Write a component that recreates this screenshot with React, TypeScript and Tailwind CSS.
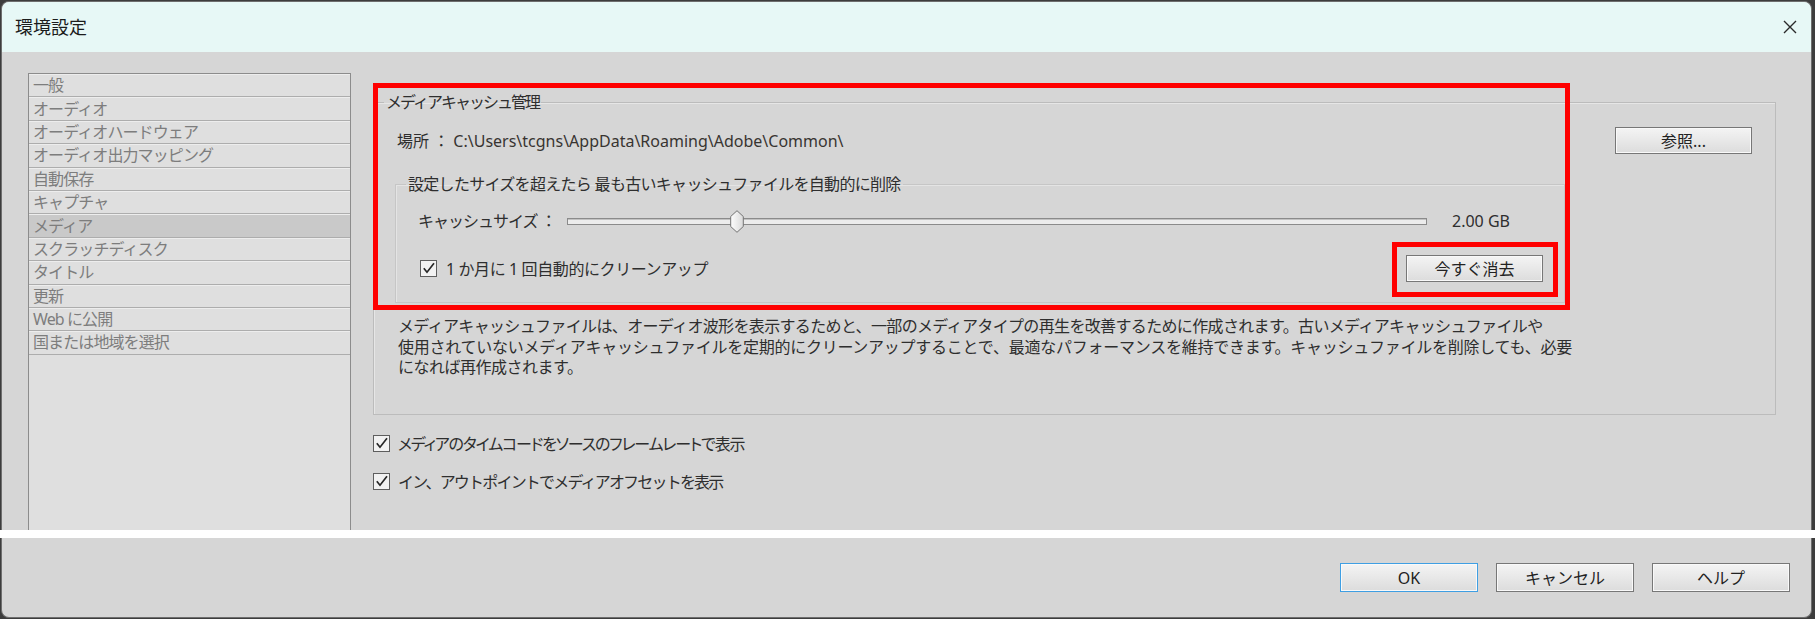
import React from "react";

const categories = [
  "一般",
  "オーディオ",
  "オーディオハードウェア",
  "オーディオ出力マッピング",
  "自動保存",
  "キャプチャ",
  "メディア",
  "スクラッチディスク",
  "タイトル",
  "更新",
  "Web に公開",
  "国または地域を選択",
];

const font = "[font-family:'Noto_Sans','Noto_Sans_CJK_JP',sans-serif]";

function Check() {
  return (
    <span className="flex h-[17px] w-[17px] shrink-0 items-center justify-center border border-[#5e5e5e] bg-[#f2f2f2]">
      <svg viewBox="0 0 15 15" className="h-[15px] w-[15px]">
        <path d="M2.8 7.2 L6 11.2 L13 2.2" fill="none" stroke="#262626" strokeWidth="1.7" />
      </svg>
    </span>
  );
}

function Button({ children, className = "" }: { children: React.ReactNode; className?: string }) {
  return (
    <button
      type="button"
      className={`flex items-center justify-center border bg-[linear-gradient(#f4f4f4,#dcdcdc)] text-[16px] text-[#222] shadow-[inset_0_0_0_1px_#f9f9f9] ${className}`}
    >
      {children}
    </button>
  );
}

export default function App() {
  return (
    <div className={`h-[619px] w-[1815px] overflow-hidden bg-[#3d3d3d] pt-px ${font}`}>
      {/* upper part of the dialog */}
      <div className="ml-px flex h-[529px] w-[1811px] flex-col overflow-hidden rounded-t-[8px] border-x border-t border-[#6e6e6e] bg-[#d6d6d6]">
        <div className="flex h-[50px] shrink-0 items-center justify-between bg-[#e7f8f6] pl-[13px] pr-[14px]">
          <span className="text-[18px] text-[#1c1c1c]">環境設定</span>
          <svg viewBox="0 0 14 14" className="h-[14px] w-[14px]">
            <path d="M1 1 L13 13 M13 1 L1 13" stroke="#2a2a2a" strokeWidth="1.4" />
          </svg>
        </div>

        <div className="relative flex min-h-0 flex-1 overflow-hidden">
          {/* category list */}
          <div className="ml-[26px] mt-[21px] h-[480px] w-[323px] shrink-0 border border-[#8c8c8c] bg-[#dfdfdf]">
            {categories.map((c) => (
              <div
                key={c}
                className={`flex h-[23.4px] items-center border-b border-[#adadad] pl-[4px] text-[16px] leading-none tracking-[-0.9px] text-[#7d7d7d] shadow-[inset_0_1px_0_#ededed] ${
                  c === "メディア" ? "bg-[#c9c9c9]" : ""
                }`}
              >
                {c}
              </div>
            ))}
          </div>

          {/* media settings */}
          <div className="ml-[22px] w-[1403px] shrink-0 text-[16px] text-[#2e2e2e]">
            <fieldset className="mt-[39px] border border-[#bcbcbc] pb-[36px] shadow-[inset_1px_1px_0_#e6e6e6]">
              <legend className="ml-[10px] px-[2px] leading-[22px] tracking-[-2px]">メディアキャッシュ管理</legend>

              <div className="mt-[14px] flex h-[27px] items-center justify-between pl-[23px] pr-[23px]">
                <span>
                  場所 ： <span className="text-[#383431]">C:\Users\tcgns\AppData\Roaming\Adobe\Common\</span>
                </span>
                <Button className="h-[27px] w-[137px] border-[#777]">参照...</Button>
              </div>

              <fieldset className="ml-[21px] mr-[210px] mt-[19px] border border-[#c6c6c6] pb-[20px] shadow-[inset_1px_1px_0_#e4e4e4]">
                <legend className="ml-[10px] px-[2px] leading-[22px] tracking-[-0.7px]">
                  設定したサイズを超えたら 最も古いキャッシュファイルを自動的に削除
                </legend>

                <div className="mt-[15px] flex h-[22px] items-center pl-[22px]">
                  <span className="w-[149px] shrink-0 tracking-[-1px]">キャッシュサイズ ：</span>
                  <div className="relative h-[22px] w-[860px] shrink-0">
                    <div className="absolute left-0 right-0 top-[8px] h-[7px] border border-[#8b8b8b] bg-[#ececec] shadow-[inset_0_1px_0_#c2c2c2]" />
                    <svg viewBox="0 0 14 23" className="absolute left-[163px] top-0 h-[23px] w-[14px]">
                      <defs>
                        <linearGradient id="thumb" x1="0" y1="0" x2="1" y2="0">
                          <stop offset="0" stopColor="#fdfdfd" />
                          <stop offset="1" stopColor="#dadada" />
                        </linearGradient>
                      </defs>
                      <path d="M7 0.7 L13.3 6.5 V16.5 L7 22.3 L0.7 16.5 V6.5 Z" fill="url(#thumb)" stroke="#737373" strokeWidth="1" />
                    </svg>
                  </div>
                  <span className="ml-[25px]">2.00 GB</span>
                </div>

                <div className="mt-[23px] flex h-[27px] items-center justify-between pl-[24px] pr-[21px]">
                  <div className="flex items-center gap-[9px]">
                    <Check />
                    <span className="tracking-[-0.4px]">1 か月に 1 回自動的にクリーンアップ</span>
                  </div>
                  <Button className="h-[27px] w-[137px] border-[#777]">今すぐ消去</Button>
                </div>
              </fieldset>

              <p className="mt-[13px] whitespace-nowrap pl-[24px] leading-[20.5px]">
                <span className="block tracking-[-0.65px]">
                  メディアキャッシュファイルは、オーディオ波形を表示するためと、一部のメディアタイプの再生を改善するために作成されます。古いメディアキャッシュファイルや
                </span>
                <span className="block tracking-[-0.25px]">
                  使用されていないメディアキャッシュファイルを定期的にクリーンアップすることで、最適なパフォーマンスを維持できます。キャッシュファイルを削除しても、必要
                </span>
                <span className="block tracking-[-0.5px]">になれば再作成されます。</span>
              </p>
            </fieldset>

            <div className="mt-[19px] flex h-[20px] items-center gap-[8px]">
              <Check />
              <span className="[font-feature-settings:'palt'] tracking-[-1.15px]">メディアのタイムコードをソースのフレームレートで表示</span>
            </div>
            <div className="mt-[18px] flex h-[20px] items-center gap-[8px]">
              <Check />
              <span className="tracking-[-1.8px]">イン、アウトポイントでメディアオフセットを表示</span>
            </div>
          </div>

          {/* highlight frames */}
          <div className="pointer-events-none absolute left-[371px] top-[31px] h-[227px] w-[1197px] border-[5px] border-[#ff0000]" />
          <div className="pointer-events-none absolute left-[1390px] top-[190px] h-[55px] w-[166px] border-[5px] border-[#ff0000]" />
        </div>
      </div>

      <div className="h-[8px] w-full bg-white" />

      {/* button row */}
      <div className="ml-px flex h-[80px] w-[1811px] items-start justify-end gap-[18px] rounded-b-[8px] border-x border-b border-[#6e6e6e] bg-[#d6d6d6] pr-[21px] pt-[25px]">
        <Button className="h-[29px] w-[138px] border-[#3f9fe3] shadow-[inset_0_0_0_1px_#8fcaf2]">OK</Button>
        <Button className="h-[29px] w-[138px] border-[#777]">キャンセル</Button>
        <Button className="h-[29px] w-[138px] border-[#777]">ヘルプ</Button>
      </div>
    </div>
  );
}
